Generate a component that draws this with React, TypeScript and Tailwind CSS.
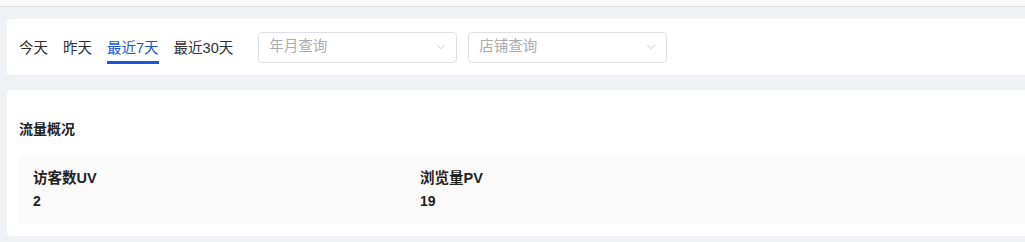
import { ChevronDown } from "lucide-react";

const tabs = ["今天", "昨天", "最近7天", "最近30天"];

const stats = [
  { label: "访客数UV", value: "2" },
  { label: "浏览量PV", value: "19" }
];

function Select({ placeholder }: { placeholder: string }) {
  return (
    <div className="flex h-[31px] w-[199px] items-center justify-between rounded border border-[#dcdfe6] bg-white pl-[10px] pr-[8px]">
      <span className="text-[14.5px] text-[#a8abb2]">{placeholder}</span>
      <ChevronDown className="h-[14px] w-[14px] text-[#c0c4cc]" strokeWidth={1.5} />
    </div>
  );
}

export default function App() {
  return (
    <div
      className="min-h-[242px] overflow-hidden bg-[#f0f1f5] text-[#303133]"
      style={{ fontFamily: '"Liberation Sans", "Noto Sans CJK SC", sans-serif' }}
    >
      <div className="h-[7px] border-b border-[#dedede] bg-[#f8f8f8]" />

      <div className="pl-[7px] pt-[12px]">
        <div className="flex h-[56px] w-[1100px] items-center rounded bg-white pl-[12px]">
          <div className="flex gap-[15px]">
            {tabs.map((t) => (
              <div
                key={t}
                className={
                  t === "最近7天"
                    ? "relative pt-[3px] text-[14.5px] text-[#1e56d6]"
                    : "pt-[3px] text-[14.5px] text-[#303133]"
                }
              >
                {t}
                {t === "最近7天" && (
                  <div className="absolute left-0 right-0 top-[26px] h-[3px] bg-[#1a55d8]" />
                )}
              </div>
            ))}
          </div>
          <div className="ml-[25px] flex gap-[11px]">
            <Select placeholder="年月查询" />
            <Select placeholder="店铺查询" />
          </div>
        </div>

        <div className="mt-[15px] w-[1100px] rounded bg-white px-[12px] pb-[12px] pt-[30px]">
          <div className="text-[14px] font-bold leading-[18px] text-[#222]">流量概况</div>
          <div className="mt-[17px] grid h-[69px] grid-cols-[387px_387px] content-center bg-[#fafafa] px-[14px]">
            {stats.map((s) => (
              <div key={s.label} className="flex flex-col gap-[5px]">
                <div className="text-[14.5px] font-bold leading-[18px] text-[#222]">{s.label}</div>
                <div className="text-[14px] font-bold leading-[18px] text-[#222]">{s.value}</div>
              </div>
            ))}
          </div>
        </div>
      </div>
    </div>
  );
}
